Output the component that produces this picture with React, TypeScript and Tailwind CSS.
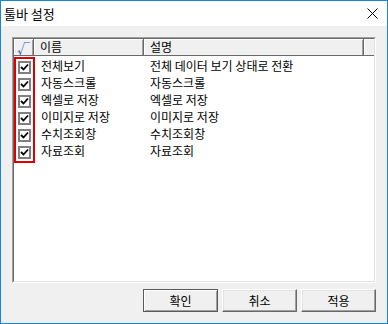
import React from "react";

const rows = [
  ["전체보기", "전체 데이터 보기 상태로 전환"],
  ["자동스크롤", "자동스크롤"],
  ["엑셀로 저장", "엑셀로 저장"],
  ["이미지로 저장", "이미지로 저장"],
  ["수치조회창", "수치조회창"],
  ["자료조회", "자료조회"],
];

function Check() {
  return (
    <div className="w-[13px] h-[13px] border-2 border-[#808080] bg-white flex items-center justify-center">
      <svg width="9" height="9" viewBox="0 0 9 9">
        <path d="M1 4 L3.5 6.5 L8 1.5" stroke="#000" strokeWidth="1.8" fill="none" />
      </svg>
    </div>
  );
}

function Btn({ label, def }: { label: string; def?: boolean }) {
  return (
    <div
      className={
        "w-[75px] h-[23px] flex items-center justify-center bg-[#f0f0f0] text-[12px] text-black " +
        (def
          ? "border border-[#5a5a5a] shadow-[inset_1px_1px_0_#ffffff,inset_-1px_-1px_0_#a0a0a0]"
          : "border-t border-l border-t-white border-l-white border-r border-b border-r-[#696969] border-b-[#696969] shadow-[inset_-1px_-1px_0_#a0a0a0,inset_1px_1px_0_#e3e3e3]")
      }
    >
      {label}
    </div>
  );
}

export default function App() {
  return (
    <div
      className="w-[388px] h-[324px] border border-[#1883d7] flex flex-col bg-[#f0f0f0] text-black"
      style={{ fontFamily: '"Noto Sans CJK KR", "Noto Sans", sans-serif' }}
    >
      <div className="h-[25px] bg-white flex items-center justify-between pl-[3px] pr-[9px] shrink-0">
        <span className="text-[13px] leading-none">툴바 설정</span>
        <svg width="11" height="11" viewBox="0 0 11 11">
          <path d="M0.5 0.5 L10.5 10.5 M10.5 0.5 L0.5 10.5" stroke="#000" strokeWidth="1" />
        </svg>
      </div>
      <div className="flex-1 flex flex-col px-[11px] pt-[11px] pb-[11px]">
        <div className="h-[246px] border-t border-l border-t-[#a0a0a0] border-l-[#a0a0a0] border-r border-b border-r-white border-b-white">
          <div className="h-full border-t border-l border-t-[#696969] border-l-[#696969] border-r border-b border-r-[#e3e3e3] border-b-[#e3e3e3] bg-white flex flex-col">
            <div className="h-[17px] flex bg-[#f0f0f0] border-b border-[#696969] text-[12px] leading-none shrink-0">
              <div className="w-[20px] flex items-center justify-center border-r border-[#696969] shadow-[inset_1px_1px_0_#fff,inset_-1px_0_0_#a0a0a0] text-[#2255cc] text-[13px]">
                √
              </div>
              <div className="w-[110px] flex items-center pl-[6px] border-r border-[#696969] shadow-[inset_1px_1px_0_#fff,inset_-1px_0_0_#a0a0a0]">
                이름
              </div>
              <div className="w-[220px] flex items-center pl-[6px] border-r border-[#696969] shadow-[inset_1px_1px_0_#fff,inset_-1px_0_0_#a0a0a0]">
                설명
              </div>
              <div className="flex-1 shadow-[inset_1px_1px_0_#fff]" />
            </div>
            <div className="flex pt-[1px]">
              <div className="w-[21px] border-2 border-[#e00000] flex flex-col">
                {rows.map((r) => (
                  <div key={r[0]} className="h-[17px] flex items-center justify-center">
                    <Check />
                  </div>
                ))}
              </div>
              <div className="flex flex-col text-[12px] leading-none">
                {rows.map((r) => (
                  <div key={r[0]} className="h-[17px] flex items-center">
                    <div className="w-[109px] pl-[6px]">{r[0]}</div>
                    <div className="pl-[6px]">{r[1]}</div>
                  </div>
                ))}
              </div>
            </div>
          </div>
        </div>
        <div className="flex justify-end gap-[4px] mt-[6px]">
          <Btn label="확인" def />
          <Btn label="취소" />
          <Btn label="적용" />
        </div>
      </div>
    </div>
  );
}
